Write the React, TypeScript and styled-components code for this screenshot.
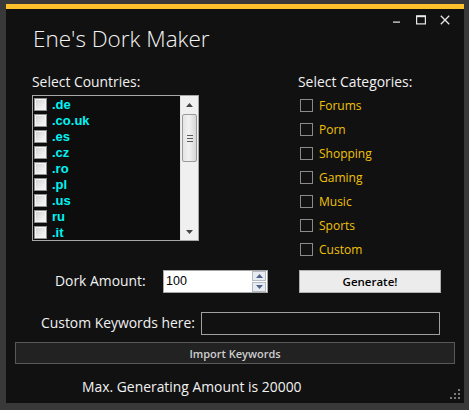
import React from "react";
import styled, { createGlobalStyle } from "styled-components";

const Global = createGlobalStyle`
  html, body { margin: 0; padding: 0; }
  body {
    background: #393939;
    width: 469px;
    height: 410px;
    overflow: hidden;
    font-family: "Open Sans", "Noto Sans", sans-serif;
  }
`;

const Window = styled.div`
  position: relative;
  box-sizing: border-box;
  margin: 4px 0 0 6px;
  width: 458px;
  height: 399px;
  background: #111111;
  border-top: 5px solid #fdc22b;
  display: flex;
  flex-direction: column;
`;

const TitleBar = styled.div`
  display: flex;
  justify-content: space-between;
  align-items: flex-start;
  height: 61px;
`;

const Title = styled.h1`
  margin: 16px 0 0 27px;
  font-family: "Open Sans", sans-serif;
  font-weight: 300;
  font-size: 22.5px;
  line-height: 28px;
  color: #f4f4f4;
`;

const Controls = styled.div`
  display: flex;
  align-items: flex-start;
  gap: 14px;
  margin: 6px 14px 0 0;
`;

const CtlIcon = styled.svg`
  display: block;
  width: 10px;
  height: 10px;
`;

const Main = styled.div`
  display: flex;
  align-items: flex-start;
  padding-left: 26px;
`;

const Column = styled.div<{ $w: number; $ml?: number }>`
  width: ${(p) => p.$w}px;
  margin-left: ${(p) => p.$ml ?? 0}px;
  display: flex;
  flex-direction: column;
`;

const Label = styled.div`
  font-family: "Open Sans", sans-serif;
  font-size: 13.9px;
  line-height: 16px;
  color: #f2f2f2;
  white-space: nowrap;
  margin-top: 4px;
`;

const ListBox = styled.div`
  margin-top: 5px;
  box-sizing: border-box;
  width: 167px;
  height: 146px;
  border: 1px solid #a8a8a8;
  background: #0d0d0d;
  display: flex;
  overflow: hidden;
`;

const Items = styled.div`
  flex: 1;
  display: flex;
  flex-direction: column;
`;

const Item = styled.div`
  height: 16px;
  display: flex;
  align-items: center;
  padding-left: 1px;
  gap: 5px;
  font-family: "Liberation Sans", Arial, sans-serif;
  font-weight: 700;
  font-size: 13px;
  color: #00f4f4;
`;

const Box3D = styled.span`
  box-sizing: border-box;
  width: 13px;
  height: 13px;
  border: 1px solid #8e8f8f;
  background: linear-gradient(135deg, #d0d0d0 0%, #ececec 60%, #f8f8f8 100%);
  box-shadow: inset 0 0 0 1px #f4f4f4;
  flex: none;
`;

const ScrollBar = styled.div`
  width: 17px;
  background: #f0f0f0;
  border-left: 1px solid #e4e4e4;
  display: flex;
  flex-direction: column;
  align-items: center;
`;

const ArrowBtn = styled.div`
  height: 17px;
  width: 100%;
  display: flex;
  align-items: center;
  justify-content: center;
`;

const Thumb = styled.div`
  box-sizing: border-box;
  width: 15px;
  height: 48px;
  margin-top: 1px;
  border: 1px solid #9a9a9a;
  border-radius: 2px;
  background: linear-gradient(90deg, #e4e4e4, #f2f2f2 45%, #d6d6d6);
  display: flex;
  flex-direction: column;
  align-items: center;
  justify-content: center;
  gap: 2px;
`;

const GripLine = styled.span`
  width: 6px;
  height: 1px;
  background: #5a5a5a;
`;

const Spacer = styled.div`
  flex: 1;
`;

const CatList = styled.div`
  margin-top: 3px;
  display: flex;
  flex-direction: column;
`;

const CatRow = styled.label`
  height: 24px;
  display: flex;
  align-items: center;
  gap: 6px;
  padding-left: 2px;
  font-family: "Open Sans", sans-serif;
  font-size: 12px;
  color: #f0c20a;
`;

const FlatBox = styled.span`
  box-sizing: border-box;
  width: 13px;
  height: 13px;
  border: 1px solid #8a8a8a;
  flex: none;
`;

const Row = styled.div<{ $mt: number; $pl: number }>`
  display: flex;
  align-items: center;
  margin-top: ${(p) => p.$mt}px;
  padding-left: ${(p) => p.$pl}px;
  height: 24px;
`;

const RowLabel = styled(Label)<{ $w: number }>`
  margin-top: 0;
  width: ${(p) => p.$w}px;
`;

const NumBox = styled.div`
  box-sizing: border-box;
  width: 105px;
  height: 23px;
  background: #ffffff;
  border: 1px solid #a6a6a6;
  display: flex;
  align-items: center;
  justify-content: space-between;
  padding: 0 1px 0 2px;
  font-family: "Liberation Sans", Arial, sans-serif;
  font-size: 12.5px;
  color: #000;
`;

const Spin = styled.div`
  display: flex;
  flex-direction: column;
  gap: 1px;
`;

const SpinBtn = styled.div`
  box-sizing: border-box;
  width: 14px;
  height: 10px;
  background: #e8ebf0;
  border: 1px solid #b4bac4;
  display: flex;
  align-items: center;
  justify-content: center;
`;

const GenButton = styled.button`
  box-sizing: border-box;
  margin-left: 31px;
  width: 142px;
  height: 23px;
  background: #ececec;
  border: 1px solid #b0b0b0;
  font-family: "Open Sans", sans-serif;
  font-weight: 600;
  font-size: 11.5px;
  color: #000;
  padding: 0;
`;

const TextInput = styled.div`
  box-sizing: border-box;
  width: 239px;
  height: 23px;
  border: 1px solid #a0a0a0;
  background: #111111;
`;

const ImportButton = styled.button`
  box-sizing: border-box;
  margin: 7px 0 0 9px;
  width: 440px;
  height: 22px;
  background: #222222;
  border: 1px solid #585858;
  font-family: "Open Sans", sans-serif;
  font-weight: 600;
  font-size: 11px;
  color: #cfcfcf;
  padding: 0;
`;

const Footer = styled(Label)`
  margin: 15px 0 0 76px;
`;

const Grip = styled.svg`
  position: absolute;
  right: 4px;
  bottom: 4px;
  width: 10px;
  height: 10px;
`;

const countries = [".de", ".co.uk", ".es", ".cz", ".ro", ".pl", ".us", "ru", ".it"];
const categories = ["Forums", "Porn", "Shopping", "Gaming", "Music", "Sports", "Custom"];

export default function App() {
  return (
    <>
      <Global />
      <Window>
        <TitleBar>
          <Title>Ene's Dork Maker</Title>
          <Controls>
            <CtlIcon viewBox="0 0 10 10">
              <rect x="1" y="6.5" width="7" height="1.2" fill="#e8e8e8" />
            </CtlIcon>
            <CtlIcon viewBox="0 0 10 10">
              <rect x="0.6" y="0.9" width="8.8" height="8" fill="none" stroke="#e8e8e8" strokeWidth="1.2" />
              <rect x="0.6" y="0.6" width="8.8" height="1.6" fill="#e8e8e8" />
            </CtlIcon>
            <CtlIcon viewBox="0 0 10 10">
              <path d="M0.8 0.8 L9.2 9.2 M9.2 0.8 L0.8 9.2" stroke="#e8e8e8" strokeWidth="1.3" />
            </CtlIcon>
          </Controls>
        </TitleBar>

        <Main>
          <Column $w={167}>
            <Label>Select Countries:</Label>
            <ListBox>
              <Items>
                {countries.map((c) => (
                  <Item key={c}>
                    <Box3D />
                    {c}
                  </Item>
                ))}
              </Items>
              <ScrollBar>
                <ArrowBtn>
                  <svg width="7" height="4" viewBox="0 0 7 4">
                    <path d="M0 4 L3.5 0 L7 4 Z" fill="#444" />
                  </svg>
                </ArrowBtn>
                <Thumb>
                  <GripLine />
                  <GripLine />
                  <GripLine />
                </Thumb>
                <Spacer />
                <ArrowBtn>
                  <svg width="7" height="4" viewBox="0 0 7 4">
                    <path d="M0 0 L7 0 L3.5 4 Z" fill="#444" />
                  </svg>
                </ArrowBtn>
              </ScrollBar>
            </ListBox>
          </Column>
          <Column $w={150} $ml={99}>
            <Label>Select Categories:</Label>
            <CatList>
              {categories.map((c) => (
                <CatRow key={c}>
                  <FlatBox />
                  {c}
                </CatRow>
              ))}
            </CatList>
          </Column>
        </Main>

        <Row $mt={8} $pl={49}>
          <RowLabel $w={108}>Dork Amount:</RowLabel>
          <NumBox>
            100
            <Spin>
              <SpinBtn>
                <svg width="7" height="4" viewBox="0 0 7 4">
                  <path d="M0 4 L3.5 0 L7 4 Z" fill="#4d6389" />
                </svg>
              </SpinBtn>
              <SpinBtn>
                <svg width="7" height="4" viewBox="0 0 7 4">
                  <path d="M0 0 L7 0 L3.5 4 Z" fill="#4d6389" />
                </svg>
              </SpinBtn>
            </Spin>
          </NumBox>
          <GenButton>Generate!</GenButton>
        </Row>

        <Row $mt={18} $pl={35}>
          <RowLabel $w={160}>Custom Keywords here:</RowLabel>
          <TextInput />
        </Row>

        <ImportButton>Import Keywords</ImportButton>

        <Footer>Max. Generating Amount is 20000</Footer>

        <Grip viewBox="0 0 10 10">
          <rect x="8" y="0" width="2" height="2" fill="#7a7a7a" />
          <rect x="4" y="4" width="2" height="2" fill="#7a7a7a" />
          <rect x="8" y="4" width="2" height="2" fill="#7a7a7a" />
          <rect x="0" y="8" width="2" height="2" fill="#7a7a7a" />
          <rect x="4" y="8" width="2" height="2" fill="#7a7a7a" />
          <rect x="8" y="8" width="2" height="2" fill="#7a7a7a" />
        </Grip>
      </Window>
    </>
  );
}
